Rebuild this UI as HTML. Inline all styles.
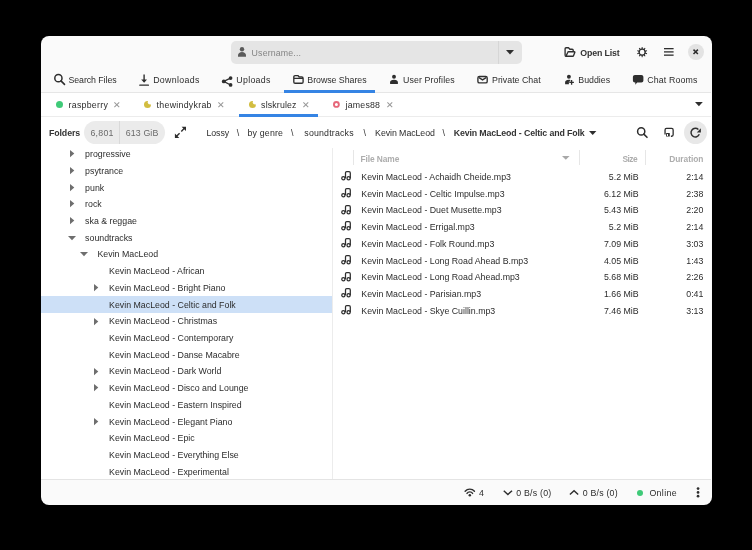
<!DOCTYPE html>
<html><head><meta charset="utf-8">
<style>
html,body{margin:0;padding:0;width:752px;height:550px;background:#000;overflow:hidden}
body{position:relative;font-family:"Liberation Sans",sans-serif}
.a{position:absolute}
.t{position:absolute;white-space:nowrap;font-size:8.8px;line-height:10px}
svg{position:absolute;overflow:visible}
.ic{fill:#2e2e2e}
.st{fill:none;stroke:#2e2e2e}
</style></head><body>
<!-- window -->
<div class="a" style="left:40.5px;top:36.3px;width:671.1px;height:469.2px;border-radius:8px;background:#fafafa"></div>
<!-- white areas -->
<div class="a" style="left:41px;top:92px;width:669.5px;height:387px;background:#fff"></div>
<!-- separators -->
<div class="a" style="left:41px;top:91.5px;width:669.5px;height:1px;background:#e6e6e6"></div>
<div class="a" style="left:41px;top:116px;width:669.5px;height:1px;background:#ececec"></div>
<div class="a" style="left:41px;top:479px;width:669.5px;height:1px;background:#e4e4e4"></div>
<div class="a" style="left:332px;top:148px;width:1px;height:331px;background:#ececec"></div>

<!-- header: username entry -->
<div class="a" style="left:231px;top:41px;width:291px;height:22.6px;border-radius:5px;background:#e5e5e5"></div>
<div class="a" style="left:498px;top:41px;width:1px;height:22.6px;background:#d6d6d6"></div>
<svg style="left:238px;top:47.3px" width="8" height="9.7" viewBox="0 0 8 9.7"><circle class="ic" fill="#555" cx="4" cy="2.2" r="2.2" style="fill:#5a5a5a"/><path style="fill:#5a5a5a" d="M0 9.7V8.3C0 6.3 1.8 5 4 5s4 1.3 4 3.3v1.4z"/></svg>
<svg style="left:506px;top:49.6px" width="8" height="4.5" viewBox="0 0 8 4.5"><path class="ic" d="M0 0h8L4 4.5z"/></svg>
<!-- open list -->
<svg style="left:560px;top:42px" width="20" height="20" viewBox="0 0 20 20"><path class="st" stroke-width="1.35" stroke-linejoin="round" d="M5.1 13.2V6.7c0-.6.4-1 1-1h2.4l1.4 1.5h2.3c.6 0 1 .4 1 1v1.3M5.4 14.2h7.4c.4 0 .6-.2.7-.5l1.3-3.2c.2-.4-.1-.8-.5-.8H8.6c-.4 0-.7.2-.8.5L6 14.2"/><path class="st" stroke-width="1.35" d="M5.1 13.2c0 .6.4 1 1 1"/></svg>
<!-- gear -->
<svg style="left:636.9px;top:47px" width="10.3" height="10.3" viewBox="0 0 16 16"><path class="ic" fill-rule="evenodd" d="M7.00 2.39 L7.35 0.03 L8.65 0.03 L9.00 2.39 L10.49 2.87 L12.16 1.17 L13.21 1.93 L12.11 4.05 L13.03 5.32 L15.38 4.92 L15.78 6.16 L13.65 7.21 L13.65 8.79 L15.78 9.84 L15.38 11.08 L13.03 10.68 L12.11 11.95 L13.21 14.07 L12.16 14.83 L10.49 13.13 L9.00 13.61 L8.65 15.97 L7.35 15.97 L7.00 13.61 L5.51 13.13 L3.84 14.83 L2.79 14.07 L3.89 11.95 L2.97 10.68 L0.62 11.08 L0.22 9.84 L2.35 8.79 L2.35 7.21 L0.22 6.16 L0.62 4.92 L2.97 5.32 L3.89 4.05 L2.79 1.93 L3.84 1.17 L5.51 2.87Z M11.6 8 A3.6 3.6 0 1 0 4.4 8 A3.6 3.6 0 1 0 11.6 8Z"/></svg>
<!-- hamburger -->
<svg style="left:664px;top:48.1px" width="9.6" height="7.8" viewBox="0 0 9.6 7.8"><rect class="ic" x="0" y="0" width="9.6" height="1.3"/><rect class="ic" x="0" y="3.25" width="9.6" height="1.3"/><rect class="ic" x="0" y="6.5" width="9.6" height="1.3"/></svg>
<!-- close -->
<div class="a" style="left:687.9px;top:44.1px;width:15.8px;height:15.8px;border-radius:50%;background:#e3e3e3"></div>
<svg style="left:686px;top:42px" width="20" height="20" viewBox="0 0 20 20"><path class="st" stroke-width="1.5" d="M7.5 7.6l4.4 4.4M11.9 7.6l-4.4 4.4"/></svg>

<!-- tab bar icons -->
<svg style="left:50px;top:72px" width="20" height="16" viewBox="0 0 20 16"><circle class="st" stroke-width="1.5" cx="8.4" cy="6.2" r="3.6"/><path class="st" stroke-width="1.6" stroke-linecap="round" d="M11 8.9l3.5 3.5"/></svg>
<svg style="left:136px;top:72px" width="20" height="16" viewBox="0 0 20 16"><path class="st" stroke-width="1.4" d="M8.1 2.5v7"/><path class="ic" d="M5.2 7.4h5.8l-2.9 3.4z"/><rect class="ic" x="3.2" y="12.5" width="9.8" height="1.3" rx=".4"/></svg>
<svg style="left:218px;top:72px" width="20" height="16" viewBox="0 0 20 16"><path class="st" stroke-width="1.2" d="M5.8 9.4L12.5 6.1M5.8 9.4l6.7 3.6"/><circle class="ic" cx="5.8" cy="9.4" r="1.95"/><circle class="ic" cx="12.6" cy="6.1" r="1.85"/><circle class="ic" cx="12.6" cy="12.9" r="1.85"/></svg>
<svg style="left:288px;top:72px" width="20" height="16" viewBox="0 0 20 16"><path class="st" stroke-width="1.35" stroke-linejoin="round" d="M5.8 9.9V4.9c0-.8.5-1.3 1.3-1.3h2.8l1.3 1.3h2.6c.8 0 1.3.5 1.3 1.3v3.7c0 .8-.5 1.3-1.3 1.3H7.1c-.8 0-1.3-.5-1.3-1.3zM5.8 6.3h9.3"/></svg>
<svg style="left:384px;top:72px" width="20" height="16" viewBox="0 0 20 16"><circle class="ic" cx="10" cy="4.8" r="1.95"/><path class="ic" d="M6.1 11.9V10.3c0-1.5 1.3-2.5 3.9-2.5s3.9 1 3.9 2.5v1.6z"/></svg>
<svg style="left:472px;top:72px" width="20" height="16" viewBox="0 0 20 16"><rect class="st" stroke-width="1.35" x="5.9" y="4.5" width="9.3" height="6.4" rx="1.5"/><path class="st" stroke-width="1.3" d="M7 5.6l3.55 2.3 3.55-2.3"/></svg>
<svg style="left:560px;top:72px" width="20" height="16" viewBox="0 0 20 16"><circle class="ic" cx="8.9" cy="4.7" r="1.95"/><path class="ic" d="M5.1 12.2V10.3c0-1.5 1.4-2.5 3.7-2.5.6 0 1.1.1 1.5.2v1.6H8.9v2.6z"/><path class="st" stroke-width="1.3" d="M11.6 8.1v4.6M9.3 10.4h4.6"/></svg>
<svg style="left:628px;top:72px" width="20" height="16" viewBox="0 0 20 16"><path class="ic" d="M6.9 3.05h6.5c1.1 0 2 .9 2 2v3.55c0 1.1-.9 2-2 2H9.2l-1.9 2.1v-2.1h-.4c-1.1 0-2-.9-2-2V5.05c0-1.1.9-2 2-2z"/></svg>
<!-- active tab underline -->
<div class="a" style="left:284px;top:89.6px;width:90.7px;height:3px;background:#3584e4"></div>

<!-- user tabs -->
<div class="a" style="left:56px;top:101.3px;width:7px;height:7px;border-radius:50%;background:#3fca78"></div>
<svg style="left:144px;top:101.3px" width="7" height="7" viewBox="0 0 16 16"><mask id="MM"><rect width="16" height="16" fill="#fff"/><circle cx="14.2" cy="2.6" r="5.6" fill="#000"/></mask><circle style="fill:#d2bd40" cx="8" cy="8" r="8" mask="url(#MM)"/></svg>
<svg style="left:248.6px;top:101.3px" width="7" height="7" viewBox="0 0 16 16"><mask id="MM"><rect width="16" height="16" fill="#fff"/><circle cx="14.2" cy="2.6" r="5.6" fill="#000"/></mask><circle style="fill:#d2bd40" cx="8" cy="8" r="8" mask="url(#MM)"/></svg>
<svg style="left:330px;top:98px" width="14" height="14" viewBox="0 0 14 14"><circle cx="6.4" cy="6.4" r="2.45" fill="none" stroke="#e6687a" stroke-width="1.9"/></svg>
<svg style="left:113.8px;top:102px" width="5.6" height="5.6" viewBox="0 0 6 6"><path class="st" style="stroke:#9a9a9a" stroke-width="1.1" d="M.4.4l5.2 5.2M5.6.4L.4 5.6"/></svg>
<svg style="left:218.4px;top:102px" width="5.6" height="5.6" viewBox="0 0 6 6"><path class="st" style="stroke:#9a9a9a" stroke-width="1.1" d="M.4.4l5.2 5.2M5.6.4L.4 5.6"/></svg>
<svg style="left:302.7px;top:102px" width="5.6" height="5.6" viewBox="0 0 6 6"><path class="st" style="stroke:#9a9a9a" stroke-width="1.1" d="M.4.4l5.2 5.2M5.6.4L.4 5.6"/></svg>
<svg style="left:386.7px;top:102px" width="5.6" height="5.6" viewBox="0 0 6 6"><path class="st" style="stroke:#9a9a9a" stroke-width="1.1" d="M.4.4l5.2 5.2M5.6.4L.4 5.6"/></svg>
<svg style="left:695.2px;top:101.9px" width="7.8" height="4.3" viewBox="0 0 8 4.4"><path class="ic" d="M0 0h8L4 4.4z"/></svg>
<div class="a" style="left:238.7px;top:114.3px;width:79px;height:2.6px;background:#3584e4"></div>

<!-- folder toolbar -->
<div class="a" style="left:83.6px;top:120.8px;width:81.4px;height:23.2px;border-radius:11.6px;background:#ebebeb"></div>
<div class="a" style="left:118.8px;top:120.8px;width:1px;height:23.2px;background:#d9d9d9"></div>
<svg style="left:170px;top:122px" width="20" height="20" viewBox="0 0 20 20"><path class="ic" d="M11.6 4.7H16v4.4z M4.9 11.6V16h4.4z"/><path class="st" stroke-width="1.4" d="M14.6 6.1l-3.3 3.3M6.3 14.6l3.3-3.3"/></svg>
<svg style="left:588.6px;top:130.8px" width="7.4" height="3.9" viewBox="0 0 8 4.2"><path class="ic" d="M0 0h8L4 4.2z"/></svg>
<svg style="left:630px;top:122px" width="20" height="20" viewBox="0 0 20 20"><circle class="st" stroke-width="1.5" cx="11.2" cy="9.4" r="3.6"/><path class="st" stroke-width="1.6" stroke-linecap="round" d="M13.8 12.1l3.2 3.2"/></svg>
<svg style="left:660px;top:122px" width="20" height="20" viewBox="0 0 20 20"><path class="st" stroke-width="1.3" d="M5.05 12.5V7.9c0-.8.6-1.45 1.45-1.45h5.2c.8 0 1.45.6 1.45 1.45v4.9c0 .8-.6 1.45-1.45 1.45h-.8"/><rect class="ic" x="6" y="11.1" width="3.8" height="3.4" rx=".5"/><rect style="fill:#fff" x="6.9" y="12" width="1.1" height="2"/></svg>
<div class="a" style="left:684.1px;top:121.1px;width:22.9px;height:22.9px;border-radius:50%;background:#e8e8e8"></div>
<svg style="left:686px;top:122px" width="20" height="20" viewBox="0 0 20 20"><path class="st" stroke-width="1.45" d="M13.3 12.3A4.3 4.3 0 1 1 12.4 7.6"/><path class="ic" d="M14.9 6.3v4.2h-4.1z"/></svg>

<!-- tree arrows -->
<svg style="left:70px;top:150.30px" width="4.3" height="7.2" viewBox="0 0 4.3 7.2"><path style="fill:#6e6e6e" d="M0 0l4.3 3.6L0 7.2z"/></svg>
<svg style="left:70px;top:167.02px" width="4.3" height="7.2" viewBox="0 0 4.3 7.2"><path style="fill:#6e6e6e" d="M0 0l4.3 3.6L0 7.2z"/></svg>
<svg style="left:70px;top:183.74px" width="4.3" height="7.2" viewBox="0 0 4.3 7.2"><path style="fill:#6e6e6e" d="M0 0l4.3 3.6L0 7.2z"/></svg>
<svg style="left:70px;top:200.46px" width="4.3" height="7.2" viewBox="0 0 4.3 7.2"><path style="fill:#6e6e6e" d="M0 0l4.3 3.6L0 7.2z"/></svg>
<svg style="left:70px;top:217.18px" width="4.3" height="7.2" viewBox="0 0 4.3 7.2"><path style="fill:#6e6e6e" d="M0 0l4.3 3.6L0 7.2z"/></svg>
<svg style="left:68.2px;top:235.50px" width="8" height="4.2" viewBox="0 0 8 4.2"><path style="fill:#6e6e6e" d="M0 0h8L4 4.2z"/></svg>
<svg style="left:80.2px;top:252.22px" width="8" height="4.2" viewBox="0 0 8 4.2"><path style="fill:#6e6e6e" d="M0 0h8L4 4.2z"/></svg>
<svg style="left:93.9px;top:284.06px" width="4.3" height="7.2" viewBox="0 0 4.3 7.2"><path style="fill:#6e6e6e" d="M0 0l4.3 3.6L0 7.2z"/></svg>
<svg style="left:93.9px;top:317.50px" width="4.3" height="7.2" viewBox="0 0 4.3 7.2"><path style="fill:#6e6e6e" d="M0 0l4.3 3.6L0 7.2z"/></svg>
<svg style="left:93.9px;top:367.66px" width="4.3" height="7.2" viewBox="0 0 4.3 7.2"><path style="fill:#6e6e6e" d="M0 0l4.3 3.6L0 7.2z"/></svg>
<svg style="left:93.9px;top:384.38px" width="4.3" height="7.2" viewBox="0 0 4.3 7.2"><path style="fill:#6e6e6e" d="M0 0l4.3 3.6L0 7.2z"/></svg>
<svg style="left:93.9px;top:417.82px" width="4.3" height="7.2" viewBox="0 0 4.3 7.2"><path style="fill:#6e6e6e" d="M0 0l4.3 3.6L0 7.2z"/></svg>
<div class="a" style="left:41px;top:295.7px;width:291px;height:17px;background:#cde0f7"></div>

<!-- list header -->
<div class="a" style="left:352.5px;top:150px;width:1px;height:15.4px;background:#e6e6e6"></div>
<div class="a" style="left:578.5px;top:150px;width:1px;height:15.4px;background:#e6e6e6"></div>
<div class="a" style="left:645.2px;top:150px;width:1px;height:15.4px;background:#e6e6e6"></div>
<svg style="left:561.8px;top:156.3px" width="7.6" height="3.8" viewBox="0 0 8 4"><path style="fill:#a8a8a8" d="M0 0h8L4 4z"/></svg>
<svg style="left:341.1px;top:171.10px" width="10" height="9.4" viewBox="0 0 10 9.4"><path class="st" stroke-width="1.25" d="M4.5 7.2V1.8C4.5 1.1 5 .6 5.7.6h2.3c.7 0 1.3.6 1.3 1.3v5.3"/><circle class="st" stroke-width="1.25" cx="2.35" cy="7.3" r="1.6"/><circle class="st" stroke-width="1.25" cx="7.6" cy="7.3" r="1.6"/></svg>
<svg style="left:341.1px;top:187.85px" width="10" height="9.4" viewBox="0 0 10 9.4"><path class="st" stroke-width="1.25" d="M4.5 7.2V1.8C4.5 1.1 5 .6 5.7.6h2.3c.7 0 1.3.6 1.3 1.3v5.3"/><circle class="st" stroke-width="1.25" cx="2.35" cy="7.3" r="1.6"/><circle class="st" stroke-width="1.25" cx="7.6" cy="7.3" r="1.6"/></svg>
<svg style="left:341.1px;top:204.60px" width="10" height="9.4" viewBox="0 0 10 9.4"><path class="st" stroke-width="1.25" d="M4.5 7.2V1.8C4.5 1.1 5 .6 5.7.6h2.3c.7 0 1.3.6 1.3 1.3v5.3"/><circle class="st" stroke-width="1.25" cx="2.35" cy="7.3" r="1.6"/><circle class="st" stroke-width="1.25" cx="7.6" cy="7.3" r="1.6"/></svg>
<svg style="left:341.1px;top:221.35px" width="10" height="9.4" viewBox="0 0 10 9.4"><path class="st" stroke-width="1.25" d="M4.5 7.2V1.8C4.5 1.1 5 .6 5.7.6h2.3c.7 0 1.3.6 1.3 1.3v5.3"/><circle class="st" stroke-width="1.25" cx="2.35" cy="7.3" r="1.6"/><circle class="st" stroke-width="1.25" cx="7.6" cy="7.3" r="1.6"/></svg>
<svg style="left:341.1px;top:238.10px" width="10" height="9.4" viewBox="0 0 10 9.4"><path class="st" stroke-width="1.25" d="M4.5 7.2V1.8C4.5 1.1 5 .6 5.7.6h2.3c.7 0 1.3.6 1.3 1.3v5.3"/><circle class="st" stroke-width="1.25" cx="2.35" cy="7.3" r="1.6"/><circle class="st" stroke-width="1.25" cx="7.6" cy="7.3" r="1.6"/></svg>
<svg style="left:341.1px;top:254.85px" width="10" height="9.4" viewBox="0 0 10 9.4"><path class="st" stroke-width="1.25" d="M4.5 7.2V1.8C4.5 1.1 5 .6 5.7.6h2.3c.7 0 1.3.6 1.3 1.3v5.3"/><circle class="st" stroke-width="1.25" cx="2.35" cy="7.3" r="1.6"/><circle class="st" stroke-width="1.25" cx="7.6" cy="7.3" r="1.6"/></svg>
<svg style="left:341.1px;top:271.60px" width="10" height="9.4" viewBox="0 0 10 9.4"><path class="st" stroke-width="1.25" d="M4.5 7.2V1.8C4.5 1.1 5 .6 5.7.6h2.3c.7 0 1.3.6 1.3 1.3v5.3"/><circle class="st" stroke-width="1.25" cx="2.35" cy="7.3" r="1.6"/><circle class="st" stroke-width="1.25" cx="7.6" cy="7.3" r="1.6"/></svg>
<svg style="left:341.1px;top:288.35px" width="10" height="9.4" viewBox="0 0 10 9.4"><path class="st" stroke-width="1.25" d="M4.5 7.2V1.8C4.5 1.1 5 .6 5.7.6h2.3c.7 0 1.3.6 1.3 1.3v5.3"/><circle class="st" stroke-width="1.25" cx="2.35" cy="7.3" r="1.6"/><circle class="st" stroke-width="1.25" cx="7.6" cy="7.3" r="1.6"/></svg>
<svg style="left:341.1px;top:305.10px" width="10" height="9.4" viewBox="0 0 10 9.4"><path class="st" stroke-width="1.25" d="M4.5 7.2V1.8C4.5 1.1 5 .6 5.7.6h2.3c.7 0 1.3.6 1.3 1.3v5.3"/><circle class="st" stroke-width="1.25" cx="2.35" cy="7.3" r="1.6"/><circle class="st" stroke-width="1.25" cx="7.6" cy="7.3" r="1.6"/></svg>

<!-- status bar -->
<svg style="left:460px;top:482px" width="20" height="20" viewBox="0 0 20 20"><path class="st" stroke-width="1.4" stroke-linecap="round" d="M5.13 9.28A6.1 6.1 0 0 1 14.47 9.28M7 11.45A3.3 3.3 0 0 1 12.6 11.45"/><circle class="ic" cx="9.8" cy="13.2" r="1.25"/></svg>
<svg style="left:502.5px;top:490.1px" width="9.8" height="5.2" viewBox="0 0 10 5.4"><path class="st" stroke-width="1.5" d="M.7.7L5 4.6 9.3.7"/></svg>
<svg style="left:568.5px;top:490.1px" width="10.1" height="5.2" viewBox="0 0 10 5.4"><path class="st" stroke-width="1.5" d="M.7 4.7L5 .8l4.3 3.9"/></svg>
<div class="a" style="left:636.8px;top:489.8px;width:6.5px;height:6.5px;border-radius:50%;background:#3fca78"></div>
<svg style="left:696.4px;top:487.1px" width="4.1" height="10.8" viewBox="0 0 4 10.8"><circle class="ic" cx="2" cy="1.6" r="1.35"/><circle class="ic" cx="2" cy="5.4" r="1.35"/><circle class="ic" cx="2" cy="9.2" r="1.35"/></svg>

<div style="position:absolute;left:0;top:0;width:752px;height:550px;will-change:transform">
<div class="t" style="left:251.60px;top:47.50px;color:#848484;letter-spacing:0.148px;">Username...</div>
<div class="t" style="left:580.30px;top:47.50px;color:#333333;font-weight:bold;letter-spacing:-0.147px;">Open List</div>
<div class="t" style="left:68.50px;top:75.00px;color:#2c2c2c;letter-spacing:-0.072px;">Search Files</div>
<div class="t" style="left:153.20px;top:75.00px;color:#2c2c2c;letter-spacing:0.334px;">Downloads</div>
<div class="t" style="left:236.30px;top:75.00px;color:#2c2c2c;letter-spacing:0.303px;">Uploads</div>
<div class="t" style="left:307.30px;top:75.00px;color:#2c2c2c;letter-spacing:-0.030px;">Browse Shares</div>
<div class="t" style="left:403.10px;top:75.00px;color:#2c2c2c;letter-spacing:0.095px;">User Profiles</div>
<div class="t" style="left:492.00px;top:75.00px;color:#2c2c2c;letter-spacing:0.018px;">Private Chat</div>
<div class="t" style="left:578.30px;top:75.00px;color:#2c2c2c;letter-spacing:0.001px;">Buddies</div>
<div class="t" style="left:647.30px;top:75.00px;color:#2c2c2c;letter-spacing:0.145px;">Chat Rooms</div>
<div class="t" style="left:68.60px;top:99.80px;color:#2c2c2c;letter-spacing:0.255px;">raspberry</div>
<div class="t" style="left:156.60px;top:99.80px;color:#2c2c2c;letter-spacing:0.278px;">thewindykrab</div>
<div class="t" style="left:261.10px;top:99.80px;color:#2c2c2c;letter-spacing:0.148px;">slskrulez</div>
<div class="t" style="left:345.50px;top:99.80px;color:#2c2c2c;letter-spacing:0.206px;">james88</div>
<div class="t" style="left:48.90px;top:128.00px;color:#333333;font-weight:bold;letter-spacing:-0.080px;">Folders</div>
<div class="t" style="left:90.40px;top:128.00px;color:#6a6a6a;letter-spacing:0.271px;">6,801</div>
<div class="t" style="left:125.80px;top:128.00px;color:#6a6a6a;letter-spacing:0.117px;">613 GiB</div>
<div class="t" style="left:206.50px;top:128.00px;color:#2c2c2c;letter-spacing:-0.096px;">Lossy</div>
<div class="t" style="left:236.80px;top:128.00px;color:#2c2c2c;">\</div>
<div class="t" style="left:247.50px;top:128.00px;color:#2c2c2c;letter-spacing:0.181px;">by genre</div>
<div class="t" style="left:291.00px;top:128.00px;color:#2c2c2c;">\</div>
<div class="t" style="left:304.30px;top:128.00px;color:#2c2c2c;letter-spacing:0.186px;">soundtracks</div>
<div class="t" style="left:363.40px;top:128.00px;color:#2c2c2c;">\</div>
<div class="t" style="left:375.10px;top:128.00px;color:#2c2c2c;letter-spacing:-0.070px;">Kevin MacLeod</div>
<div class="t" style="left:442.60px;top:128.00px;color:#2c2c2c;">\</div>
<div class="t" style="left:453.70px;top:128.00px;color:#333333;font-weight:bold;letter-spacing:-0.131px;">Kevin MacLeod - Celtic and Folk</div>
<div class="t" style="left:85.10px;top:149.10px;color:#2c2c2c;">progressive</div>
<div class="t" style="left:85.10px;top:165.82px;color:#2c2c2c;">psytrance</div>
<div class="t" style="left:85.10px;top:182.54px;color:#2c2c2c;">punk</div>
<div class="t" style="left:85.10px;top:199.26px;color:#2c2c2c;">rock</div>
<div class="t" style="left:85.10px;top:215.98px;color:#2c2c2c;">ska &amp; reggae</div>
<div class="t" style="left:85.10px;top:232.70px;color:#2c2c2c;">soundtracks</div>
<div class="t" style="left:97.50px;top:249.42px;color:#2c2c2c;">Kevin MacLeod</div>
<div class="t" style="left:109.10px;top:266.14px;color:#2c2c2c;">Kevin MacLeod - African</div>
<div class="t" style="left:109.10px;top:282.86px;color:#2c2c2c;">Kevin MacLeod - Bright Piano</div>
<div class="t" style="left:109.10px;top:299.58px;color:#2c2c2c;">Kevin MacLeod - Celtic and Folk</div>
<div class="t" style="left:109.10px;top:316.30px;color:#2c2c2c;">Kevin MacLeod - Christmas</div>
<div class="t" style="left:109.10px;top:333.02px;color:#2c2c2c;">Kevin MacLeod - Contemporary</div>
<div class="t" style="left:109.10px;top:349.74px;color:#2c2c2c;">Kevin MacLeod - Danse Macabre</div>
<div class="t" style="left:109.10px;top:366.46px;color:#2c2c2c;">Kevin MacLeod - Dark World</div>
<div class="t" style="left:109.10px;top:383.18px;color:#2c2c2c;">Kevin MacLeod - Disco and Lounge</div>
<div class="t" style="left:109.10px;top:399.90px;color:#2c2c2c;">Kevin MacLeod - Eastern Inspired</div>
<div class="t" style="left:109.10px;top:416.62px;color:#2c2c2c;">Kevin MacLeod - Elegant Piano</div>
<div class="t" style="left:109.10px;top:433.34px;color:#2c2c2c;">Kevin MacLeod - Epic</div>
<div class="t" style="left:109.10px;top:450.06px;color:#2c2c2c;">Kevin MacLeod - Everything Else</div>
<div class="t" style="left:109.10px;top:466.78px;color:#2c2c2c;">Kevin MacLeod - Experimental</div>
<div class="t" style="left:360.60px;top:153.90px;color:#adadad;font-weight:bold;font-size:8.4px;letter-spacing:-0.097px;">File Name</div>
<div class="t" style="left:622.40px;top:153.90px;color:#adadad;font-weight:bold;font-size:8.4px;letter-spacing:-0.522px;">Size</div>
<div class="t" style="left:669.20px;top:153.90px;color:#adadad;font-weight:bold;font-size:8.4px;letter-spacing:-0.034px;">Duration</div>
<div class="t" style="left:361.30px;top:171.80px;color:#2c2c2c;">Kevin MacLeod - Achaidh Cheide.mp3</div>
<div class="t" style="left:608.87px;top:171.80px;color:#2c2c2c;">5.2 MiB</div>
<div class="t" style="left:686.27px;top:171.80px;color:#2c2c2c;">2:14</div>
<div class="t" style="left:361.30px;top:188.55px;color:#2c2c2c;">Kevin MacLeod - Celtic Impulse.mp3</div>
<div class="t" style="left:603.98px;top:188.55px;color:#2c2c2c;">6.12 MiB</div>
<div class="t" style="left:686.27px;top:188.55px;color:#2c2c2c;">2:38</div>
<div class="t" style="left:361.30px;top:205.30px;color:#2c2c2c;">Kevin MacLeod - Duet Musette.mp3</div>
<div class="t" style="left:603.98px;top:205.30px;color:#2c2c2c;">5.43 MiB</div>
<div class="t" style="left:686.27px;top:205.30px;color:#2c2c2c;">2:20</div>
<div class="t" style="left:361.30px;top:222.05px;color:#2c2c2c;">Kevin MacLeod - Errigal.mp3</div>
<div class="t" style="left:608.87px;top:222.05px;color:#2c2c2c;">5.2 MiB</div>
<div class="t" style="left:686.27px;top:222.05px;color:#2c2c2c;">2:14</div>
<div class="t" style="left:361.30px;top:238.80px;color:#2c2c2c;">Kevin MacLeod - Folk Round.mp3</div>
<div class="t" style="left:603.98px;top:238.80px;color:#2c2c2c;">7.09 MiB</div>
<div class="t" style="left:686.27px;top:238.80px;color:#2c2c2c;">3:03</div>
<div class="t" style="left:361.30px;top:255.55px;color:#2c2c2c;">Kevin MacLeod - Long Road Ahead B.mp3</div>
<div class="t" style="left:603.98px;top:255.55px;color:#2c2c2c;">4.05 MiB</div>
<div class="t" style="left:686.27px;top:255.55px;color:#2c2c2c;">1:43</div>
<div class="t" style="left:361.30px;top:272.30px;color:#2c2c2c;">Kevin MacLeod - Long Road Ahead.mp3</div>
<div class="t" style="left:603.98px;top:272.30px;color:#2c2c2c;">5.68 MiB</div>
<div class="t" style="left:686.27px;top:272.30px;color:#2c2c2c;">2:26</div>
<div class="t" style="left:361.30px;top:289.05px;color:#2c2c2c;">Kevin MacLeod - Parisian.mp3</div>
<div class="t" style="left:603.98px;top:289.05px;color:#2c2c2c;">1.66 MiB</div>
<div class="t" style="left:686.27px;top:289.05px;color:#2c2c2c;">0:41</div>
<div class="t" style="left:361.30px;top:305.80px;color:#2c2c2c;">Kevin MacLeod - Skye Cuillin.mp3</div>
<div class="t" style="left:603.98px;top:305.80px;color:#2c2c2c;">7.46 MiB</div>
<div class="t" style="left:686.27px;top:305.80px;color:#2c2c2c;">3:13</div>
<div class="t" style="left:479.00px;top:487.90px;color:#2c2c2c;">4</div>
<div class="t" style="left:516.30px;top:487.90px;color:#2c2c2c;letter-spacing:0.206px;">0 B/s (0)</div>
<div class="t" style="left:582.80px;top:487.90px;color:#2c2c2c;letter-spacing:0.194px;">0 B/s (0)</div>
<div class="t" style="left:649.40px;top:487.90px;color:#2c2c2c;letter-spacing:0.352px;">Online</div>
</div>
</body></html>
